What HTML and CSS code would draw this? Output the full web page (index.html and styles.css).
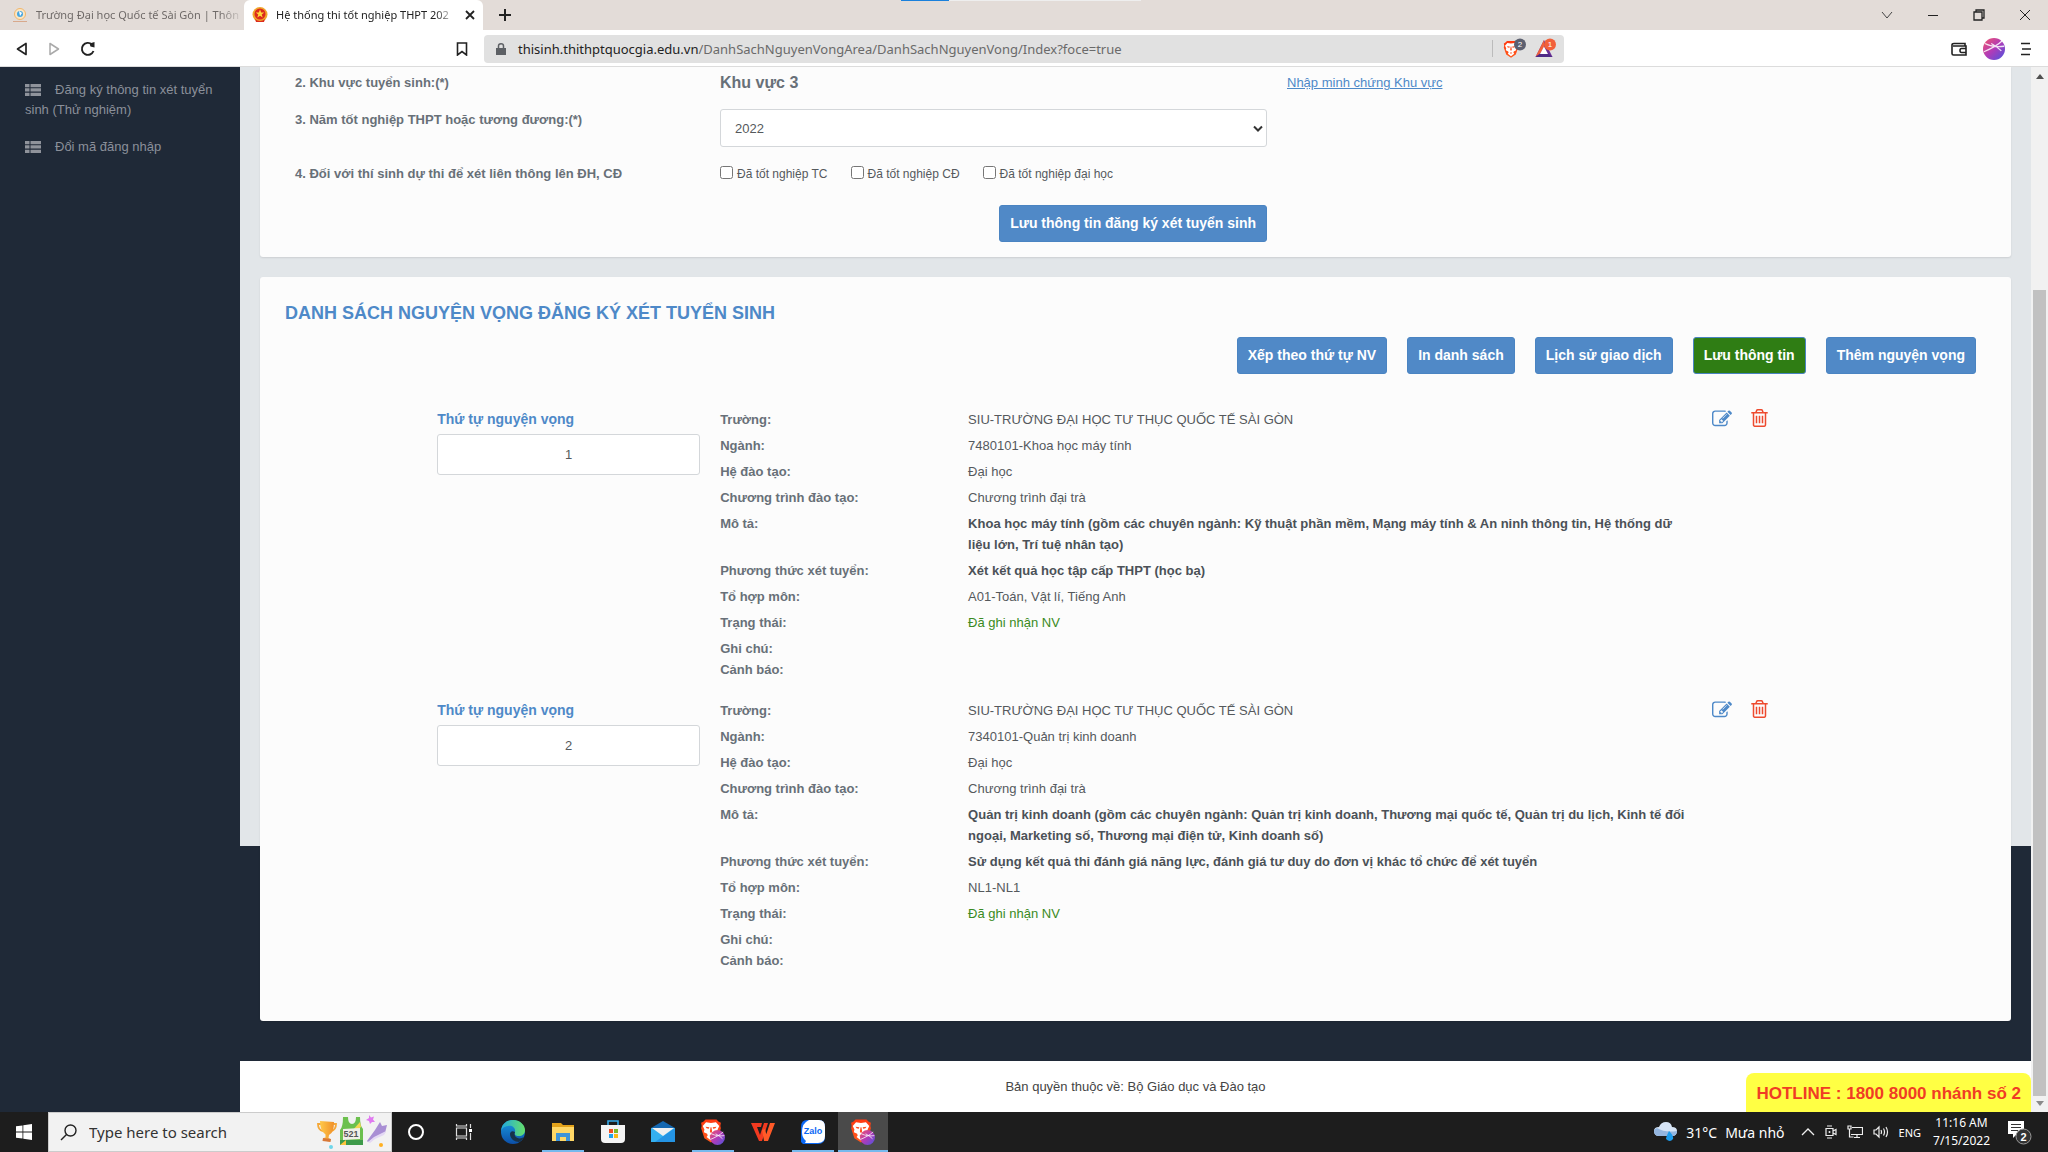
FILE: index.html
```html
<!DOCTYPE html>
<html lang="vi">
<head>
<meta charset="utf-8">
<title>Hệ thống thi tốt nghiệp THPT 2022</title>
<link rel="stylesheet" href="styles.css">
</head>
<body>
<svg class="defs" width="0" height="0" aria-hidden="true">
  <defs>
    <linearGradient id="gPlanet" x1="0" y1="0" x2="1" y2="1"><stop offset="0" stop-color="#f4566a"/><stop offset=".5" stop-color="#b03bb8"/><stop offset="1" stop-color="#4a55e0"/></linearGradient>
    <linearGradient id="gBrave" x1="0" y1="0" x2="0" y2="1"><stop offset="0" stop-color="#ff3a12"/><stop offset="1" stop-color="#ff5a1c"/></linearGradient>
    <linearGradient id="gEdgeA" x1="0" y1="0" x2="1" y2="0"><stop offset="0" stop-color="#1fa8e0"/><stop offset="1" stop-color="#66e06a"/></linearGradient>
    <linearGradient id="gEdgeB" x1="0" y1="0" x2="0" y2="1"><stop offset="0" stop-color="#1a9be0"/><stop offset="1" stop-color="#0c4fa8"/></linearGradient>
    <linearGradient id="gCup" x1="0" y1="0" x2="1" y2="0"><stop offset="0" stop-color="#ffc94a"/><stop offset="1" stop-color="#f0902a"/></linearGradient>
    <symbol id="list" viewBox="0 0 16 12"><path d="M0 0h4.500v3.300H0zM5.500 0H16v3.300H5.500zM0 4.300h4.500v3.300H0zM5.500 4.300H16v3.300H5.500zM0 8.700h4.500V12H0zM5.500 8.700H16V12H5.500z"/></symbol>
    <symbol id="edit" viewBox="0 0 1792 1792"><path d="M888 1184l116-116-152-152-116 116v56h96v96h56zm440-720q-16-16-33 1l-350 350q-17 17-1 33t33-1l350-350q17-17 1-33zm80 594v190q0 119-84.500 203.500t-203.500 84.500h-832q-119 0-203.500-84.500t-84.500-203.500v-832q0-119 84.500-203.500t203.500-84.500h832q63 0 117 25 15 7 18 23 3 17-9 29l-49 49q-14 14-32 8-23-6-45-6h-832q-66 0-113 47t-47 113v832q0 66 47 113t113 47h832q66 0 113-47t47-113v-126q0-13 9-22l64-64q15-15 35-7t20 29zm-96-738l288 288-672 672h-288v-288zm444 132l-92 92-288-288 92-92q28-28 68-28t68 28l152 152q28 28 28 68t-28 68z"/></symbol>
    <symbol id="trash" viewBox="192 128 1408 1536"><path d="M704 736v576q0 14-9 23t-23 9h-64q-14 0-23-9t-9-23v-576q0-14 9-23t23-9h64q14 0 23 9t9 23zm256 0v576q0 14-9 23t-23 9h-64q-14 0-23-9t-9-23v-576q0-14 9-23t23-9h64q14 0 23 9t9 23zm256 0v576q0 14-9 23t-23 9h-64q-14 0-23-9t-9-23v-576q0-14 9-23t23-9h64q14 0 23 9t9 23zm128 724v-948h-896v948q0 22 7 40.500t14.500 27 10.500 8.500h832q3 0 10.500-8.500t14.500-27 7-40.500zm-672-1076h448l-48-117q-7-9-17-11h-317q-10 2-17 11zm928 32v64q0 14-9 23t-23 9h-96v948q0 83-47 143.500t-113 60.500h-832q-66 0-113-58.500t-47-141.500v-952h-96q-14 0-23-9t-9-23v-64q0-14 9-23t23-9h309l70-167q15-37 54-63t79-26h320q40 0 79 26t54 63l70 167h309q14 0 23 9t9 23z"/></symbol>
    <symbol id="lion" viewBox="0 0 20 22"><path fill="url(#gBrave)" d="M5 1h10l2 2 2 1-.5 3 .5 2-3 9-6 4-6-4L1 9l.5-2L1 4l2-1z"/><path fill="#fff" d="M5.500 3.500L10 4.200l4.500-.7 3 3.500-1.500 3 .5 2.500-3 1.500-.5 1.500 1 1.500-4 3-4-3 1-1.500-.5-1.500-3-1.500.5-2.500L2.500 7z"/><path fill="#ff4a1a" d="M5 7.500l3.500.5-.5 1.500-2-.5zM15 7.500l-3.500.5.500 1.500 2-.5zM9.600 8h.8l.6 4-1 1.500-1-1.500zM8.500 16l1.500-1 1.500 1-1.500 1z"/></symbol>
    <symbol id="planet" viewBox="0 0 24 24"><circle cx="12" cy="12" r="12" fill="url(#gPlanet)"/><path d="M1 15C8 12 16 8 21 3M2 6c6 3 14 4 21 3M9 6c4 2 8 5 11 8" fill="none" stroke="#fff" stroke-width="1.400" opacity=".85"/></symbol>
    <symbol id="bravetask" viewBox="0 0 26 28"><use href="#lion" x="0" y="0" width="22" height="25"/><use href="#planet" x="10" y="12" width="15" height="15"/></symbol>
  </defs>
</svg>

<header class="browser">
  <div class="tabs">
    <div class="tab">
      <svg class="fav" viewBox="0 0 16 16"><circle cx="8" cy="7" r="5.500" fill="#fbe6c4" stroke="#f2b76a"/><circle cx="8" cy="7" r="3" fill="#46a6e0"/><path d="M7 4l3 2-2 3z" fill="#fff"/><path d="M1 14.500h14" stroke="#d8a98c"/></svg>
      <span class="tab-title">Trường Đại học Quốc tế Sài Gòn | Thôn</span>
    </div>
    <div class="tab active">
      <svg class="fav" viewBox="0 0 16 16"><circle cx="8" cy="7.500" r="7.500" fill="#f0a72c"/><circle cx="8" cy="7" r="5.500" fill="#dc2b1c"/><path d="M8 2.500l1.200 3h3l-2.500 2 1 3L8 8.700l-2.700 1.800 1-3-2.500-2h3z" fill="#ffd83a"/><path d="M3 12q5 4 10 0l-1 3H4z" fill="#dc2b1c"/></svg>
      <span class="tab-title">Hệ thống thi tốt nghiệp THPT 202</span>
      <button class="icon-btn" aria-label="Đóng thẻ"><svg width="10" height="10" viewBox="0 0 10 10"><path d="M1 1l8 8M9 1L1 9" stroke="#222" stroke-width="1.800"/></svg></button>
    </div>
    <button class="icon-btn newtab" aria-label="Thẻ mới"><svg width="12" height="12" viewBox="0 0 12 12"><path d="M6 0v12M0 6h12" stroke="#222" stroke-width="2"/></svg></button>
    <div class="loader"><i></i></div>
    <div class="winbtns">
      <button class="icon-btn" aria-label="Tìm thẻ"><svg width="12" height="12" viewBox="0 0 12 12"><path d="M1 3l5 6 5-6" fill="none" stroke="#444"/></svg></button>
      <button class="icon-btn" aria-label="Thu nhỏ"><svg width="12" height="12" viewBox="0 0 12 12"><path d="M1 6.500h10" stroke="#222"/></svg></button>
      <button class="icon-btn" aria-label="Khôi phục"><svg width="12" height="12" viewBox="0 0 12 12"><path d="M1 3h8v8H1zM3 3V1h8v8H9" fill="none" stroke="#222" stroke-width="1.300"/></svg></button>
      <button class="icon-btn" aria-label="Đóng"><svg width="12" height="12" viewBox="0 0 12 12"><path d="M1 1l10 10M11 1L1 11" stroke="#222"/></svg></button>
    </div>
  </div>
  <div class="toolbar">
    <div class="nav">
      <button class="icon-btn" aria-label="Quay lại"><svg width="12" height="14" viewBox="0 0 12 14"><path d="M10 1.500v11L1.500 7z" fill="none" stroke="#222" stroke-width="1.700" stroke-linejoin="round"/></svg></button>
      <button class="icon-btn" aria-label="Tiến"><svg width="12" height="14" viewBox="0 0 12 14"><path d="M2 1.500v11L10.500 7z" fill="none" stroke="#aaa" stroke-width="1.500" stroke-linejoin="round"/></svg></button>
      <button class="icon-btn" aria-label="Tải lại"><svg width="16" height="16" viewBox="0 0 16 16"><path d="M13.500 10A6 6 0 1 1 12 3.500" fill="none" stroke="#222" stroke-width="1.900"/><path d="M9.500 2.500L14.500 1v5.500l-4-1z" fill="#222"/></svg></button>
    </div>
    <button class="icon-btn bookmark" aria-label="Dấu trang"><svg width="12" height="14" viewBox="0 0 12 14"><path d="M1.500 1h9v12L6 9.500 1.500 13z" fill="none" stroke="#222" stroke-width="1.600"/></svg></button>
    <div class="address">
      <svg width="10" height="12" viewBox="0 0 10 12"><path d="M0 5h10v7H0z" fill="#5d6065"/><path d="M2.500 5.500V3q0-2.200 2.500-2.200T7.500 3v2.500" fill="none" stroke="#5d6065" stroke-width="1.500"/></svg>
      <span class="url"><b>thisinh.thithptquocgia.edu.vn</b>/DanhSachNguyenVongArea/DanhSachNguyenVong/Index?foce=true</span>
      <svg width="64" height="22" viewBox="0 0 64 22"><path d="M.5 2v17" stroke="#bbb"/><use href="#lion" x="11" y="1" width="16" height="20"/><circle cx="28" cy="6.500" r="6" fill="#5c6070"/><text x="28" y="9" class="cnt">2</text><path d="M52 2L43.500 19h17z" fill="#6b2f96"/><path d="M52 2L43.500 19l4.500-3 4-7z" fill="#f2603a"/><path d="M43.500 19h17L56 15.500h-8z" fill="#4f2a86"/><path d="M52 8.500L48 16h8z" fill="#fff"/><circle cx="58" cy="6.500" r="6" fill="#f2603a"/><text x="58" y="9" class="cnt">1</text></svg>
    </div>
    <div class="tools">
      <svg width="16" height="14" viewBox="0 0 16 14"><path d="M14 4V1.500H3Q1 1.500 1 3v8.500q0 1.500 1.500 1.500H15V4H2M15 6.500h-4.500q-1.500 0-1.500 2t1.500 2H15" fill="none" stroke="#222" stroke-width="1.600"/></svg>
      <svg width="22" height="22"><use href="#planet"/></svg>
      <svg width="10" height="14" viewBox="0 0 10 14"><path d="M0 1.500h9M1 7h9M0 12.500h9" stroke="#222" stroke-width="1.700"/></svg>
    </div>
  </div>
</header>

<div class="page">
  <nav class="sidebar">
    <a href="#"><svg width="16" height="12"><use href="#list"/></svg>Đăng ký thông tin xét tuyển sinh (Thử nghiệm)</a>
    <a href="#"><svg width="16" height="12"><use href="#list"/></svg>Đổi mã đăng nhập</a>
  </nav>
  <div class="body">
    <main>
      <section class="card form">
        <span class="lbl">2. Khu vực tuyển sinh:(*)</span>
        <strong class="area">Khu vực 3</strong>
        <a class="proof" href="#">Nhập minh chứng Khu vực</a>
        <label class="lbl" for="year">3. Năm tốt nghiệp THPT hoặc tương đương:(*)</label>
        <div class="select-wrap"><select id="year"><option>2022</option></select><svg width="10" height="8" viewBox="0 0 10 8"><path d="M1 1.500l4 4 4-4" fill="none" stroke="#333" stroke-width="2"/></svg></div>
        <span></span>
        <span class="lbl">4. Đối với thí sinh dự thi để xét liên thông lên ĐH, CĐ</span>
        <div class="checks">
          <label><input type="checkbox">Đã tốt nghiệp TC</label>
          <label><input type="checkbox">Đã tốt nghiệp CĐ</label>
          <label><input type="checkbox">Đã tốt nghiệp đại học</label>
        </div>
        <button class="btn save">Lưu thông tin đăng ký xét tuyển sinh</button>
      </section>

      <section class="card wishes">
        <h1>DANH SÁCH NGUYỆN VỌNG ĐĂNG KÝ XÉT TUYỂN SINH</h1>
        <div class="actions">
          <button class="btn">Xếp theo thứ tự NV</button>
          <button class="btn">In danh sách</button>
          <button class="btn">Lịch sử giao dịch</button>
          <button class="btn green">Lưu thông tin</button>
          <button class="btn">Thêm nguyện vọng</button>
        </div>

        <article class="wish">
          <div class="order"><label for="o1">Thứ tự nguyện vọng</label><input id="o1" type="text" value="1"></div>
          <dl>
            <dt>Trường:</dt><dd>SIU-TRƯỜNG ĐẠI HỌC TƯ THỤC QUỐC TẾ SÀI GÒN</dd>
            <dt>Ngành:</dt><dd>7480101-Khoa học máy tính</dd>
            <dt>Hệ đào tạo:</dt><dd>Đại học</dd>
            <dt>Chương trình đào tạo:</dt><dd>Chương trình đại trà</dd>
            <dt>Mô tả:</dt><dd class="strong">Khoa học máy tính (gồm các chuyên ngành: Kỹ thuật phần mềm, Mạng máy tính &amp; An ninh thông tin, Hệ thống dữ liệu lớn, Trí tuệ nhân tạo)</dd>
            <dt>Phương thức xét tuyển:</dt><dd class="strong">Xét kết quả học tập cấp THPT (học bạ)</dd>
            <dt>Tổ hợp môn:</dt><dd>A01-Toán, Vật lí, Tiếng Anh</dd>
            <dt>Trạng thái:</dt><dd class="ok">Đã ghi nhận NV</dd>
            <dt>Ghi chú:<br>Cảnh báo:</dt><dd></dd>
          </dl>
          <div class="row-tools">
            <button class="icon-btn edit" aria-label="Sửa"><svg width="20" height="20"><use href="#edit"/></svg></button>
            <button class="icon-btn del" aria-label="Xóa"><svg width="17" height="18"><use href="#trash"/></svg></button>
          </div>
        </article>

        <article class="wish">
          <div class="order"><label for="o2">Thứ tự nguyện vọng</label><input id="o2" type="text" value="2"></div>
          <dl>
            <dt>Trường:</dt><dd>SIU-TRƯỜNG ĐẠI HỌC TƯ THỤC QUỐC TẾ SÀI GÒN</dd>
            <dt>Ngành:</dt><dd>7340101-Quản trị kinh doanh</dd>
            <dt>Hệ đào tạo:</dt><dd>Đại học</dd>
            <dt>Chương trình đào tạo:</dt><dd>Chương trình đại trà</dd>
            <dt>Mô tả:</dt><dd class="strong">Quản trị kinh doanh (gồm các chuyên ngành: Quản trị kinh doanh, Thương mại quốc tế, Quản trị du lịch, Kinh tế đối ngoại, Marketing số, Thương mại điện tử, Kinh doanh số)</dd>
            <dt>Phương thức xét tuyển:</dt><dd class="strong">Sử dụng kết quả thi đánh giá năng lực, đánh giá tư duy do đơn vị khác tổ chức để xét tuyển</dd>
            <dt>Tổ hợp môn:</dt><dd>NL1-NL1</dd>
            <dt>Trạng thái:</dt><dd class="ok">Đã ghi nhận NV</dd>
            <dt>Ghi chú:<br>Cảnh báo:</dt><dd></dd>
          </dl>
          <div class="row-tools">
            <button class="icon-btn edit" aria-label="Sửa"><svg width="20" height="20"><use href="#edit"/></svg></button>
            <button class="icon-btn del" aria-label="Xóa"><svg width="17" height="18"><use href="#trash"/></svg></button>
          </div>
        </article>
      </section>
    </main>
    <footer>Bản quyền thuộc về: Bộ Giáo dục và Đào tạo</footer>
    <div class="hotline">HOTLINE : 1800 8000 nhánh số 2</div>
  </div>
  <div class="scroll">
    <svg width="8" height="6" viewBox="0 0 8 6"><path d="M4 0l4 5H0z" fill="#505050"/></svg>
    <div class="track"><i></i></div>
    <svg width="8" height="6" viewBox="0 0 8 6"><path d="M4 5l4-5H0z" fill="#8a8a8a"/></svg>
  </div>
</div>

<div class="taskbar">
  <button class="task small" aria-label="Start"><svg width="16" height="16" viewBox="0 0 16 16"><path d="M0 2.300l6.500-.9v6.200H0zM7.300 1.300L16 0v7.600H7.300zM0 8.400h6.500v6.200L0 13.700zM7.300 8.400H16V16l-8.700-1.300z" fill="#fff"/></svg></button>
  <div class="search">
    <svg width="17" height="17" viewBox="0 0 17 17"><circle cx="10.500" cy="6.500" r="5.500" fill="none" stroke="#222" stroke-width="1.400"/><path d="M6.500 10.500L1 16" stroke="#222" stroke-width="1.400"/></svg>
    <input type="text" placeholder="Type here to search" aria-label="Type here to search">
    <svg width="72" height="36" viewBox="0 0 72 36">
      <path d="M5 10H2q0 6 5 7M17 10h3q0 6-5 7" fill="none" stroke="#f5a838" stroke-width="1.800"/><path d="M4 7l14 1q0 11-5 13l-.5 3 2 1-.5 2.500-7-1 .5-2.500 2-.5v-3Q4 17 4 7z" fill="url(#gCup)"/><path d="M7 24l8 1-.5 3-8-1z" fill="#d87838"/>
      <path d="M27 3h5q0 7 4 7t4-7h4q0 9 3 12v16H24V16q3-3 3-13z" fill="#6cc04e"/><path d="M24 26h23v5H24z" fill="#3e9a4a"/><path d="M44 8l1 5-5 4h-4z" fill="#f5d850"/><path d="M24 31l6-5v5z" fill="#ffc43e"/><path d="M27 15l17-1v11l-17 1z" fill="#f0efe8"/><text x="35" y="23" class="bib">521</text>
      <path d="M51 27l8-11 5-8 2 4 5-1-2 8-11 5-6 4z" fill="#a98fd4"/><path d="M52 28l6-5 12-6-2 4-9 4-5 4z" fill="#e3d8f4"/><path d="M53 1l2 2.500 3-1-1 3 2 2.500h-3l-2 2-1-3-3-1 3-2z" fill="#e07af0"/><circle cx="15" cy="33" r="2" fill="#6fd6ea"/><circle cx="65" cy="31" r="2" fill="#ffb020"/>
    </svg>
  </div>
  <button class="task small" aria-label="Cortana"><svg width="18" height="18" viewBox="0 0 18 18"><circle cx="9" cy="9" r="7" fill="none" stroke="#fff" stroke-width="2"/></svg></button>
  <button class="task small" aria-label="Task View"><svg width="18" height="18" viewBox="0 0 18 18"><path d="M1.500 5h10v8h-10zM1.500 1v2h10V1M1.500 17v-2h10v2M15.500 1v4M15.500 10v7" fill="none" stroke="#ddd" stroke-width="1.200"/><path d="M14 6h3v3h-3z" fill="#fff"/></svg></button>
  <button class="task" aria-label="Edge"><svg width="24" height="24" viewBox="0 0 24 24"><circle cx="12" cy="12" r="12" fill="url(#gEdgeB)"/><path d="M0 12C0 4 6 0 12 0c7 0 12 5 12 10 0 4-3 6-6 6-4 0-5-2-4-4 1-4-3-7-7-6-4 .5-7 3-7 6z" fill="url(#gEdgeA)"/><path d="M9 14c0 5 5 8 9 8 2-1 4-3 5-5-3 2-7 2-9-1q-1-2 0-4c-3-2-5 0-5 2z" fill="#17324a"/></svg></button>
  <button class="task on" aria-label="File Explorer"><svg width="24" height="22" viewBox="0 0 24 22"><path d="M1 2h9l2 2h11v16H1z" fill="#e3a21a"/><path d="M1 6h22v14H1z" fill="#ffd766"/><path d="M5 20v-8h14v8h-4v-4H9v4z" fill="#3f94d8"/></svg></button>
  <button class="task" aria-label="Store"><svg width="24" height="24" viewBox="0 0 24 24"><path d="M7 5V1h10v4" fill="none" stroke="#35a8e8" stroke-width="1.600"/><path d="M0 5h24v14q0 4-4 4H4q-4 0-4-4z" fill="#f4f4f4"/><path d="M8 9h4v4H8z" fill="#f04f23"/><path d="M13 9h4v4h-4z" fill="#7db928"/><path d="M8 14h4v4H8z" fill="#22a2ea"/><path d="M13 14h4v4h-4z" fill="#fdb913"/></svg></button>
  <button class="task" aria-label="Mail"><svg width="24" height="24" viewBox="0 0 24 24"><path d="M0 8l12-7 12 7v3H0z" fill="#1467b0"/><path d="M0 8h24v14H0z" fill="#34b0f0"/><path d="M24 8v14H4z" fill="#2494e4"/><path d="M1 8h22l-11 8z" fill="#f0f0f0"/></svg></button>
  <button class="task on" aria-label="Brave"><svg width="26" height="28"><use href="#bravetask"/></svg></button>
  <button class="task" aria-label="WPS"><svg width="24" height="20" viewBox="0 0 24 20"><path d="M0 1h11l-1 4H6l3 8 4-12h4L11 19H8z" fill="#f23a20"/><path d="M13 19l6-18h5l-7 18zM11 8l3-1 3 12h-4z" fill="#ff5a28"/></svg></button>
  <button class="task on" aria-label="Zalo"><svg width="24" height="24" viewBox="0 0 24 24"><path d="M6 0h12q6 0 6 7v10q0 7-7 7H2l-2-2V7q0-7 6-7z" fill="#0a68f5"/><path d="M8 0h10q6 0 6 7v9q0 7-7 7H4l1-2q-4-3-4-9Q1 3 8 0z" fill="#fff"/><text x="12" y="14" class="zalo">Zalo</text></svg></button>
  <button class="task on current" aria-label="Brave"><svg width="26" height="28"><use href="#bravetask"/></svg></button>
  <div class="tray">
    <span class="weather">
      <svg width="24" height="20" viewBox="0 0 24 20"><path d="M5 14q-5 0-5-5 0-4 5-4 2-5 7-5 5 0 6 5 5 0 5 4 0 5-5 5z" fill="#d6e4f5"/><path d="M5 14q-5 0-5-5 0-2 3-3 8 5 20 3 0 5-5 5z" fill="#94b6e0"/><path d="M15 9q5 5 4 8-3 4-7 0 0-2 3-8z" fill="#1c9cec"/></svg>
      <span>31°C</span><span>Mưa nhỏ</span>
    </span>
    <svg width="14" height="8" viewBox="0 0 14 8"><path d="M1 7l6-6 6 6" fill="none" stroke="#eee" stroke-width="1.300"/></svg>
    <svg width="12" height="14" viewBox="0 0 12 14"><path d="M1 3.500h7v7H1zM8 6l3-1.500v5L8 8M2 1h5M2 13h5" fill="none" stroke="#eee" stroke-width="1.200"/><circle cx="4.500" cy="7" r="1" fill="#eee"/></svg>
    <svg width="16" height="14" viewBox="0 0 16 14"><path d="M5 2.500h10.500v7H4M7 12.500h6M10 10v2M1 1h3v3H1zM2.500 4v8h4" fill="none" stroke="#eee" stroke-width="1.200"/></svg>
    <svg width="16" height="14" viewBox="0 0 16 14"><path d="M1 5v4h2l3 3V2L3 5zM8 5q1 2 0 4M10.500 3.500q2 3.500 0 7M13 2q3 5 0 10" fill="none" stroke="#eee" stroke-width="1.200"/></svg>
    <span class="lang">ENG</span>
    <span class="clock">11:16 AM<br>7/15/2022</span>
    <svg width="24" height="26" viewBox="0 0 24 26"><path d="M0 2h16v13H9l-4 4v-4H0z" fill="#fff"/><path d="M3 5.500h10M3 8.500h10M3 11.500h7" stroke="#333"/><circle cx="15.500" cy="17.500" r="7.500" fill="#333" stroke="#999"/><text x="15.500" y="22" class="notif">2</text></svg>
  </div>
</div>
</body>
</html>
```
FILE: styles.css
```css
* { box-sizing: border-box; }
body {
  margin: 0;
  height: 100vh;
  display: flex;
  flex-direction: column;
  overflow: hidden;
  font: 13px/21px "Liberation Sans", Arial, sans-serif;
  color: #55595c;
}
.defs { position: absolute; }
svg { flex: none; display: block; }
button, input, select { font: inherit; color: inherit; }
.icon-btn { border: 0; padding: 0; background: none; display: block; flex: none; }

/* Browser frame */
.browser { font: 13px/20px "Noto Sans", "Open Sans", sans-serif; flex: none; }
.tabs { height: 30px; background: #e3dcd8; display: flex; align-items: center; position: relative; }
.tab { width: 244px; height: 30px; padding: 0 0 0 12px; display: flex; align-items: center; gap: 8px; color: #6f6a68; }
.tab.active { width: 239px; background: #fff; color: #222; border-radius: 6px 6px 0 0; padding: 0 8px; }
.fav { width: 16px; height: 16px; }
.tab-title { flex: 1; min-width: 0; white-space: nowrap; font-size: 11px; mask-image: linear-gradient(90deg, #000 88%, transparent); }
.newtab { margin-left: 16px; }
.loader { position: absolute; top: 0; left: 44%; width: 240px; height: 1px; background: #eee; }
.loader i { display: block; width: 48px; height: 1px; background: #1a80dc; }
.winbtns { margin-left: auto; display: flex; gap: 30px; padding-right: 17px; }
.winbtns { gap: 34px; }
.toolbar { height: 37px; background: #fff; border-bottom: 1px solid #dcdcdc; display: flex; align-items: center; padding-top: 1px; }
.nav { width: 456px; flex: none; display: flex; align-items: center; gap: 20px; padding-left: 16px; }
.bookmark { margin-right: 16px; }
.address { flex: 0 1 1080px; height: 28px; background: #e1e1e1; border-radius: 4px; display: flex; align-items: center; gap: 12px; padding: 0 8px 0 12px; color: #6a6a6a; }
.url { flex: 1; white-space: nowrap; }
.url b { font-weight: 400; color: #222; }
.cnt { font: 8px "Liberation Sans", sans-serif; fill: #fff; text-anchor: middle; }
.tools { margin-left: auto; display: flex; align-items: center; gap: 16px; padding-right: 17px; }

/* Page */
.page { flex: 1; min-height: 0; display: flex; overflow: hidden; }
.sidebar { width: 240px; flex: none; background: #1f2937; padding: 13px 25px; display: flex; flex-direction: column; gap: 17px; line-height: 20px; }
.sidebar a { color: #8b909a; text-decoration: none; }
.sidebar svg { display: inline-block; fill: #8f939b; margin-right: 14px; vertical-align: -2px; }
.body { flex: 1; min-width: 0; display: flex; flex-direction: column; position: relative; background: linear-gradient(#e2e6e9 779px, #1f2937 779px); }
main { flex: 1; padding: 0 20px; }
.card { background: #fcfcfc; box-shadow: 0 1px 2px rgba(0, 0, 0, .1); border-radius: 0 0 3px 3px; }
.lbl { font-weight: 700; color: #687078; }
.form { display: grid; grid-template-columns: 425fr 547fr 709fr; row-gap: 16px; padding: 5px 35px 15px; }
.area { font-size: 16px; color: #687078; }
.proof { color: #4e89c8; margin-left: 20px; }
.select-wrap { position: relative; }
.select-wrap select { width: 100%; height: 38px; display: block; appearance: none; background: #fff; border: 1px solid #d4d7da; border-radius: 3px; padding: 0 14px; }
.select-wrap svg { position: absolute; right: 4px; top: 16px; }
.checks { display: flex; gap: 23px; font-size: 12px; line-height: 23px; }
.checks label { display: flex; align-items: flex-start; gap: 4px; }
.checks input { width: 13px; height: 13px; margin: 3px 0 0; }
.btn { height: 37px; border: 1px solid #4a84c2; border-radius: 3px; background: #5089c7; color: #fff; font-size: 14px; font-weight: 700; padding: 0 10px; white-space: nowrap; }
.btn.green { background: #2f7d14; }
.save { grid-column: 1 / 3; justify-self: end; margin-top: 3px; }

.wishes { margin-top: 20px; border-radius: 3px; padding: 26px 35px 30px 25px; }
h1 { margin: 0 0 13px; font-size: 18px; line-height: 21px; color: #4e89c8; }
.actions { display: flex; justify-content: flex-end; gap: 20px; margin-bottom: 35px; }
.wish { display: grid; grid-template-columns: 263fr 972fr 264fr; column-gap: 20px; padding-left: 9%; margin-bottom: 20px; }
.order label { display: block; font-size: 14px; font-weight: 700; color: #4e89c8; margin-bottom: 4px; }
.order input { width: 100%; height: 41px; border: 1px solid #d4d7da; border-radius: 3px; background: #fff; text-align: center; }
dl { margin: 0; display: grid; grid-template-columns: 248fr 724fr; row-gap: 5px; }
dt { font-weight: 700; color: #687078; }
dd { margin: 0; }
dd.strong { font-weight: 700; color: #4b5157; }
dd.ok { color: #3a8a22; }
.row-tools { display: flex; gap: 19px; align-items: flex-start; }
.edit { fill: #4e89c8; }
.del { fill: #ee4a2e; }
footer { flex: none; height: 51px; background: #fff; display: flex; align-items: center; justify-content: center; color: #444; }
.hotline { position: absolute; right: 0; bottom: 0; height: 39px; line-height: 42px; padding: 0 10px; background: #ffff44; border-radius: 8px 8px 0 0; color: #f03c24; font-size: 17px; font-weight: 700; }
.scroll { width: 17px; flex: none; background: #f1f1f1; display: flex; flex-direction: column; align-items: center; padding: 7px 0 5px; gap: 5px; }
.track { flex: 1; width: 13px; padding-top: 205px; display: flex; }
.track i { flex: 1; background: #c1c1c1; }

/* Taskbar */
.taskbar { height: 40px; flex: none; background: #1d1d1d; display: flex; font-family: "Noto Sans", "Open Sans", sans-serif; color: #fff; }
.task { width: 42px; margin: 0 4px; flex: none; border: 0; background: none; padding: 0; display: flex; align-items: center; justify-content: center; }
.task.small { width: 48px; margin: 0; }
.task.on { box-shadow: inset 0 -2px #76b9ed; }
.task.current { width: 50px; margin: 0; background: #4a4a4a; }
.search { width: 344px; flex: none; background: #f2f2f2; border: 1px solid #ccc; display: flex; align-items: center; gap: 12px; padding: 0 3px 0 11px; }
.search input { flex: 1; min-width: 0; border: 0; padding: 0; background: none; font-size: 15px; color: #333; }
.search input::placeholder { color: #333; opacity: 1; }
.bib { font: 700 9px "Liberation Sans", sans-serif; fill: #555; text-anchor: middle; }
.zalo { font: 700 9px "Liberation Sans", sans-serif; fill: #0a68f5; text-anchor: middle; }
.notif { font: 700 11px "Liberation Sans", sans-serif; fill: #fff; text-anchor: middle; }
.tray { margin-left: auto; display: flex; align-items: center; gap: 10px; padding-right: 16px; }
.weather { font-size: 14px; margin-right: 6px; display: flex; align-items: center; gap: 8px; }
.lang { font-size: 11px; }
.clock { font-size: 12px; line-height: 18px; text-align: center; margin: 0 8px 0 2px; }
```
